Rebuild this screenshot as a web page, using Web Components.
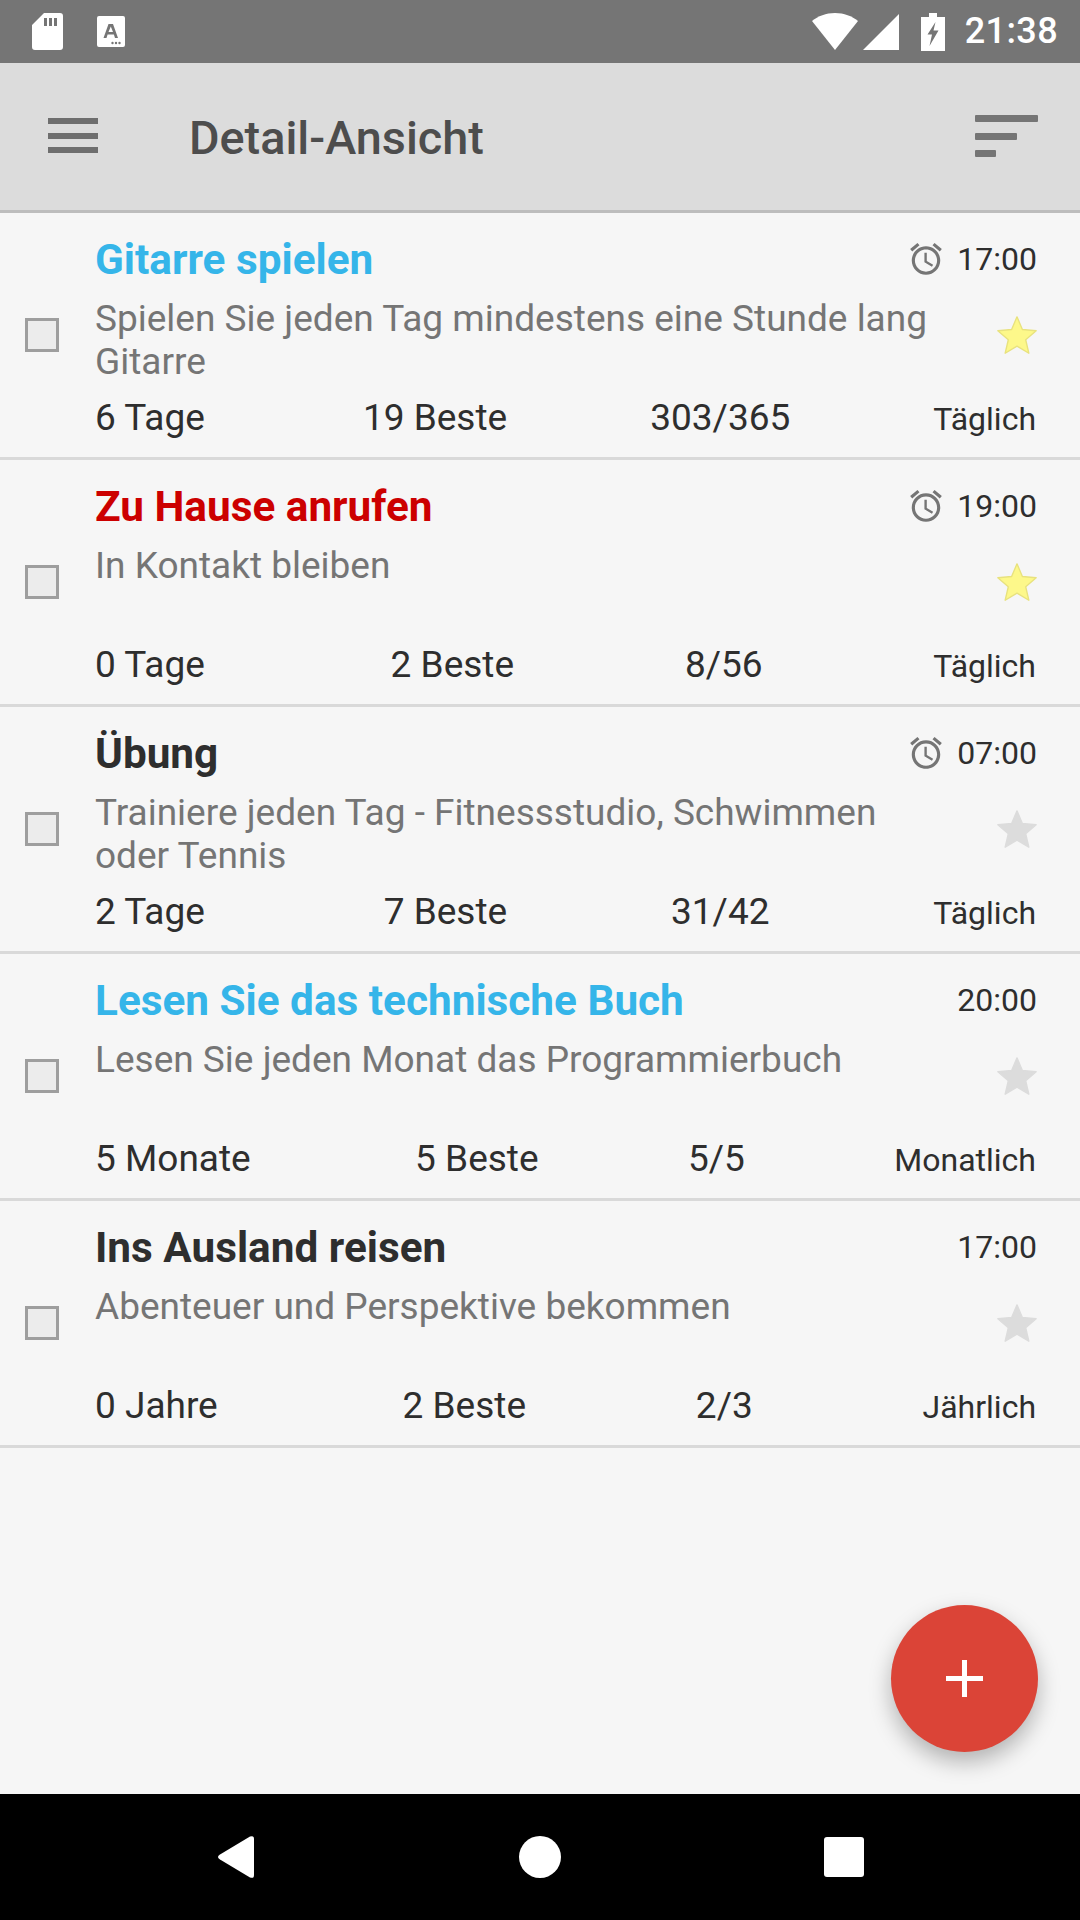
<!DOCTYPE html>
<html lang="de">
<head>
<meta charset="utf-8">
<title>Detail-Ansicht</title>
<style>
	html, body { margin: 0; padding: 0; }
	body { width: 1080px; height: 1920px; display: flex; flex-direction: column; position: relative; overflow: hidden; background: #f6f6f6; font-family: Roboto, sans-serif; }
	habit-list { flex: 1; }
</style>
</head>
<body>
<status-bar time="21:38"></status-bar>
<app-toolbar>Detail-Ansicht</app-toolbar>
<habit-list>
	<habit-row color="#35b5e9" alarm time="17:00" star>
		<span slot="title">Gitarre spielen</span>
		<span slot="desc">Spielen Sie jeden Tag mindestens eine Stunde lang Gitarre</span>
		<span slot="streak">6 Tage</span>
		<span slot="best">19 Beste</span>
		<span slot="count">303/365</span>
		<span slot="freq">Täglich</span>
	</habit-row>
	<habit-row color="#cc0000" alarm time="19:00" star>
		<span slot="title">Zu Hause anrufen</span>
		<span slot="desc">In Kontakt bleiben</span>
		<span slot="streak">0 Tage</span>
		<span slot="best">2 Beste</span>
		<span slot="count">8/56</span>
		<span slot="freq">Täglich</span>
	</habit-row>
	<habit-row color="#2e2e2e" alarm time="07:00">
		<span slot="title">Übung</span>
		<span slot="desc">Trainiere jeden Tag - Fitnessstudio, Schwimmen oder Tennis</span>
		<span slot="streak">2 Tage</span>
		<span slot="best">7 Beste</span>
		<span slot="count">31/42</span>
		<span slot="freq">Täglich</span>
	</habit-row>
	<habit-row color="#35b5e9" time="20:00">
		<span slot="title">Lesen Sie das technische Buch</span>
		<span slot="desc">Lesen Sie jeden Monat das Programmierbuch</span>
		<span slot="streak">5 Monate</span>
		<span slot="best">5 Beste</span>
		<span slot="count">5/5</span>
		<span slot="freq">Monatlich</span>
	</habit-row>
	<habit-row color="#2e2e2e" time="17:00">
		<span slot="title">Ins Ausland reisen</span>
		<span slot="desc">Abenteuer und Perspektive bekommen</span>
		<span slot="streak">0 Jahre</span>
		<span slot="best">2 Beste</span>
		<span slot="count">2/3</span>
		<span slot="freq">Jährlich</span>
	</habit-row>
</habit-list>
<nav-bar></nav-bar>
<add-button></add-button>

<script>
class StatusBar extends HTMLElement {
	constructor() {
		super();
		this.attachShadow({ mode: 'open' }).innerHTML = `
		<style>
			:host { display: flex; align-items: center; height: 63px; background: #757575; color: #fff; padding: 0 22px 0 32px; box-sizing: border-box; flex: none; }
			svg { display: block; fill: #fff; flex: none; }
			.sd { width: 31px; height: 37px; margin-top: -1px; }
			.kbd { width: 28px; height: 31px; margin-left: 34px; margin-top: -1px; }
			.space { flex: 1; }
			.wifi { width: 46px; height: 37px; margin-right: 5px; }
			.signal { width: 36px; height: 36px; margin-right: 22px; }
			.battery { width: 24px; height: 38px; margin-right: 20px; }
			.time { font-size: 36px; font-weight: 500; letter-spacing: .4px; line-height: 63px; }
		</style>
		<svg class="sd" viewBox="0 0 31 37"><path d="M12 0H28a3 3 0 0 1 3 3V34a3 3 0 0 1-3 3H3a3 3 0 0 1-3-3V12z M12 5V13H15V5z M17 5V13H20V5z M22 5V13H25V5z" fill-rule="evenodd"/></svg>
		<svg class="kbd" viewBox="0 0 28 31"><path fill-rule="evenodd" d="M2 0H26a2 2 0 0 1 2 2V29a2 2 0 0 1-2 2H2a2 2 0 0 1-2-2V2a2 2 0 0 1 2-2z M11.5 8L6.5 22H9.5L10.6 18.6H16.9L18 22H21L16 8z M11.5 16L13.8 10.5L16 16z"/><g><circle cx="15.5" cy="27" r="1.2" fill="#757575"/><circle cx="19" cy="27" r="1.2" fill="#757575"/><circle cx="22.5" cy="27" r="1.2" fill="#757575"/></g></svg>
		<div class="space"></div>
		<svg class="wifi" viewBox="0 0 46 37"><path d="M23 37L0 8C6 3 14 0 23 0S40 3 46 8z"/></svg>
		<svg class="signal" viewBox="0 0 36 36"><path d="M0 36L36 0V36z"/></svg>
		<svg class="battery" viewBox="0 0 24 38"><path fill-rule="evenodd" d="M8 0H16V4H24V38H0V4H8z M14.5 9L6.5 21.5H11L8.5 33L17.5 17.5H12.5z"/></svg>
		<span class="time">${this.getAttribute('time')}</span>`;
	}
}
customElements.define('status-bar', StatusBar);

class AppToolbar extends HTMLElement {
	constructor() {
		super();
		this.attachShadow({ mode: 'open' }).innerHTML = `
		<style>
			:host { display: flex; align-items: center; height: 150px; box-sizing: border-box; background: #dcdcdc; border-bottom: 3px solid #bdbdbd; padding: 0 42px 0 48px; flex: none; }
			.menu { width: 50px; height: 35px; display: flex; flex-direction: column; justify-content: space-between; margin-top: -2px; }
			.menu i { display: block; height: 6px; background: #6e6e6e; }
			h1 { flex: 1; margin: 3px 0 0 91px; font: 500 46.8px/1 Roboto, sans-serif; color: #4d4d4d; }
			.sort { width: 63px; height: 42px; display: flex; flex-direction: column; justify-content: space-between; margin-top: -1px; }
			.sort i { display: block; height: 7px; background: #757575; border-radius: 1px; }
		</style>
		<div class="menu"><i></i><i></i><i></i></div>
		<h1><slot></slot></h1>
		<div class="sort"><i style="width:63px"></i><i style="width:42px"></i><i style="width:21px"></i></div>`;
	}
}
customElements.define('app-toolbar', AppToolbar);

class HabitList extends HTMLElement {
	constructor() {
		super();
		this.attachShadow({ mode: 'open' }).innerHTML = `
		<style>
			:host { display: flex; flex-direction: column; min-height: 0; }
		</style>
		<slot></slot>`;
	}
}
customElements.define('habit-list', HabitList);

const ALARM = 'M22 5.72l-4.6-3.86-1.29 1.53 4.6 3.86L22 5.72zM7.88 3.39L6.6 1.86 2 5.71l1.29 1.53 4.59-3.85zM12.5 8H11v6l4.75 2.85.75-1.23-4-2.37V8zM12 4c-4.97 0-9 4.03-9 9s4.03 9 9 9 9-4.03 9-9-4.03-9-9-9zm0 16c-3.87 0-7-3.13-7-7s3.13-7 7-7 7 3.13 7 7-3.13 7-7 7z';
const STAR = 'M12 17.27L18.18 21l-1.64-7.03L22 9.24l-7.19-.61L12 2 9.19 8.63 2 9.24l5.46 4.73L5.82 21z';

class HabitRow extends HTMLElement {
	constructor() {
		super();
		const on = this.hasAttribute('star');
		const alarm = this.hasAttribute('alarm') ? `<svg class="alarm" viewBox="0 0 24 24"><path d="${ALARM}"/></svg>` : '';
		this.attachShadow({ mode: 'open' }).innerHTML = `
		<style>
			:host { display: flex; align-items: center; height: 247px; box-sizing: border-box; border-bottom: 3px solid #d9d9d9; font-family: Roboto, sans-serif; flex: none; }
			.check { width: 34px; height: 34px; box-sizing: border-box; margin: 0 36px 0 25px; border: 3px solid #9e9e9e; background: #ececec; flex: none; }
			.body { flex: 1; min-width: 0; padding-right: 44px; display: flex; flex-direction: column; align-self: stretch; }
			.head { display: flex; align-items: center; height: 60px; margin-top: 16px; }
			.title { flex: 1; font-size: 42.3px; font-weight: 700; color: ${this.getAttribute('color')}; }
			.alarm { width: 38px; height: 38px; fill: #757575; margin-right: 12px; display: block; }
			.time { font-size: 32px; color: #2e2e2e; margin-right: -1px; }
			.mid { display: flex; height: 93px; padding-top: 8px; }
			.desc { flex: 1; font-size: 37px; line-height: 43px; color: #757575; }
			.star { width: 46px; height: 46px; margin: 16px -4px 0 44px; flex: none; display: block; }
			.star path { fill: ${on ? '#fdf88a' : '#dcdcdc'}; stroke: ${on ? '#e8e27e' : '#dcdcdc'}; stroke-width: .7; stroke-linejoin: round; }
			.stats { display: flex; justify-content: space-between; align-items: baseline; font-size: 37px; color: #2e2e2e; line-height: 56px; }
			.streak { margin-right: 15px; }
			.freq { font-size: 32px; }
		</style>
		<div class="check"></div>
		<div class="body">
			<div class="head"><div class="title"><slot name="title"></slot></div>${alarm}<span class="time">${this.getAttribute('time')}</span></div>
			<div class="mid">
				<div class="desc"><slot name="desc"></slot></div>
				<svg class="star" viewBox="0 0 24 24"><path d="${STAR}"/></svg>
			</div>
			<div class="stats">
				<span class="streak"><slot name="streak"></slot></span>
				<slot name="best"></slot>
				<slot name="count"></slot>
				<span class="freq"><slot name="freq"></slot></span>
			</div>
		</div>`;
	}
}
customElements.define('habit-row', HabitRow);

class NavBar extends HTMLElement {
	constructor() {
		super();
		this.attachShadow({ mode: 'open' }).innerHTML = `
		<style>
			:host { display: block; height: 126px; background: #000; flex: none; }
			svg { display: block; width: 1080px; height: 126px; fill: #fff; }
		</style>
		<svg viewBox="0 0 1080 126">
			<path d="M220 60.5 L250 42.6 Q254 41 254 45 V81 Q254 85 250 83.4 L220 65.5 Q216 63 220 60.5 Z"/>
			<circle cx="540" cy="63" r="21"/>
			<rect x="824" y="43" width="40" height="40" rx="3"/>
		</svg>`;
	}
}
customElements.define('nav-bar', NavBar);

class AddButton extends HTMLElement {
	constructor() {
		super();
		this.attachShadow({ mode: 'open' }).innerHTML = `
		<style>
			:host { position: absolute; left: 891px; top: 1605px; width: 147px; height: 147px; border-radius: 50%; background: #db4437; box-shadow: 0 10px 22px rgba(0,0,0,.28); display: flex; align-items: center; justify-content: center; }
			svg { width: 37px; height: 37px; fill: #fff; display: block; }
		</style>
		<svg viewBox="0 0 37 37"><path d="M16 0H21V16H37V21H21V37H16V21H0V16H16z"/></svg>`;
	}
}
customElements.define('add-button', AddButton);
</script>
</body>
</html>
